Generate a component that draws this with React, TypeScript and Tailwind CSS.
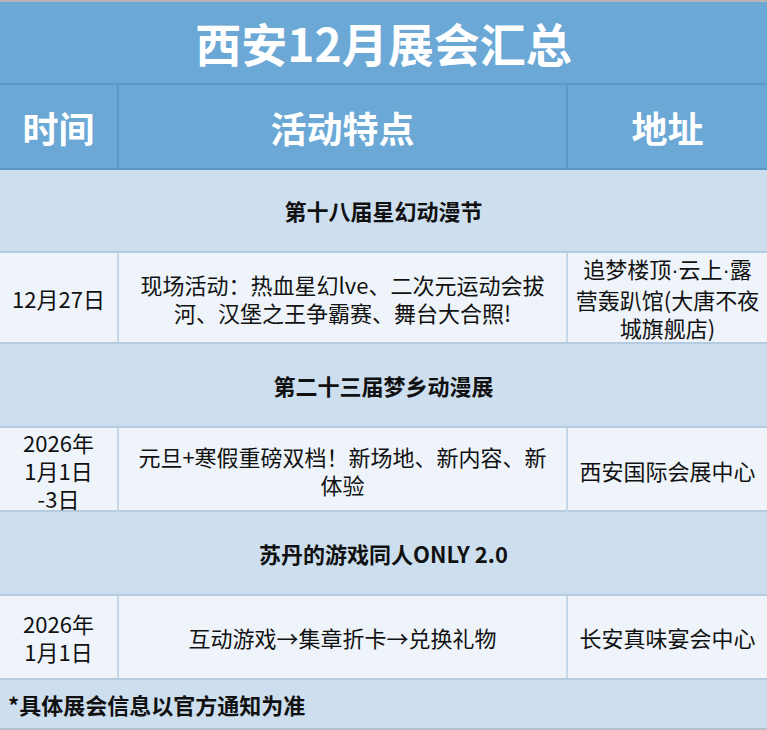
const font = { fontFamily: '"Noto Sans CJK SC", "Noto Sans", sans-serif' };
const latin = { fontFamily: '"Liberation Sans", sans-serif' };

type Event = {
  name: string;
  date: string[];
  desc: string[];
  place: string[];
};

const events: Event[] = [
  {
    name: "第十八届星幻动漫节",
    date: ["12月27日"],
    desc: ["现场活动：热血星幻lve、二次元运动会拔", "河、汉堡之王争霸赛、舞台大合照!"],
    place: ["追梦楼顶·云上·露", "营轰趴馆(大唐不夜", "城旗舰店)"],
  },
  {
    name: "第二十三届梦乡动漫展",
    date: ["2026年", "1月1日", "-3日"],
    desc: ["元旦+寒假重磅双档！新场地、新内容、新", "体验"],
    place: ["西安国际会展中心"],
  },
  {
    name: "苏丹的游戏同人ONLY 2.0",
    date: ["2026年", "1月1日"],
    desc: ["互动游戏→集章折卡→兑换礼物"],
    place: ["长安真味宴会中心"],
  },
];

// the middle dot is drawn narrow in the picture, so it gets a latin font
function Text({ value }: { value: string }) {
  const parts = value.split("·");
  return (
    <>
      {parts.map((p, i) => (
        <span key={i}>
          {i > 0 && <span style={latin}>·</span>}
          {p}
        </span>
      ))}
    </>
  );
}

function Lines({ items }: { items: string[] }) {
  return (
    <>
      {items.map((t, i) => (
        <div key={i} className="whitespace-nowrap">
          <Text value={t} />
        </div>
      ))}
    </>
  );
}

export default function App() {
  const heights = ["h-[91px]", "h-[84px]", "h-[84px]"];
  const sections = ["h-[83px]", "h-[84px]", "h-[84px]"];
  return (
    <div className="w-[767px] h-[730px] bg-[#eef4fa] border-t-2 border-[#b4b4b4] overflow-hidden" style={font}>
      <div className="h-[83px] bg-[#6ba8d6] border-b-2 border-[#5b97c7] flex items-center justify-center text-white text-[46px] font-bold">
        西安12月展会汇总
      </div>
      <div className="h-[85px] bg-[#6ba8d6] border-b-2 border-[#5b97c7] grid grid-cols-[119px_449px_1fr] text-white text-[36px] font-bold">
        <div className="border-r-2 border-[#5b97c7] flex items-center justify-center">时间</div>
        <div className="border-r-2 border-[#5b97c7] flex items-center justify-center">活动特点</div>
        <div className="flex items-center justify-center">地址</div>
      </div>
      {events.map((e, i) => (
        <div key={e.name}>
          <div
            className={`${sections[i]} bg-[#cddfef] border-b-2 border-[#b5cbdf] flex items-center justify-center text-[22px] font-bold text-[#111]`}
          >
            {e.name}
          </div>
          <div
            className={`${heights[i]} bg-[#eef4fa] border-b-2 border-[#b5cbdf] grid grid-cols-[119px_449px_1fr] text-[22px] leading-[28px] text-[#111]`}
          >
            <div className="border-r-2 border-[#c6d7e8] flex flex-col items-center justify-center text-center">
              <Lines items={e.date} />
            </div>
            <div className="border-r-2 border-[#c6d7e8] flex flex-col items-center justify-center text-center">
              <Lines items={e.desc} />
            </div>
            <div className="flex flex-col items-center justify-center text-center">
              <Lines items={e.place} />
            </div>
          </div>
        </div>
      ))}
      <div className="h-[50px] bg-[#cddfef] border-b-2 border-[#b4bfca] flex items-center px-2 text-[22px] font-bold text-[#111]">
        *具体展会信息以官方通知为准
      </div>
    </div>
  );
}
